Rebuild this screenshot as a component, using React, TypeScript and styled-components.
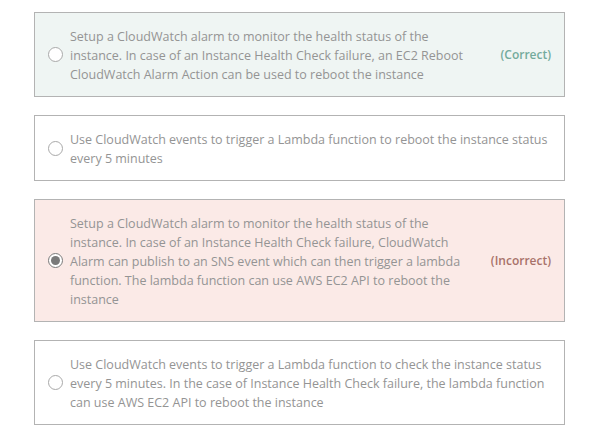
import React from "react";
import styled, { createGlobalStyle } from "styled-components";

const Global = createGlobalStyle`
  html, body { margin: 0; padding: 0; background: #ffffff; }
  body { font-family: "Open Sans", "Noto Sans", sans-serif; }
`;

const List = styled.div`
  display: flex;
  flex-direction: column;
  gap: 18px;
  width: 531px;
  padding: 12px 0 0 34px;
`;

type Status = "correct" | "incorrect" | undefined;

const Card = styled.div<{ $status?: Status }>`
  display: flex;
  align-items: center;
  box-sizing: border-box;
  border: 1px solid #b3b3b3;
  padding: 14px 13px 12px 13px;
  background: ${(p) =>
    p.$status === "correct" ? "#eff5f3" : p.$status === "incorrect" ? "#fbeae7" : "#ffffff"};
`;

const Radio = styled.span<{ $checked?: boolean }>`
  flex: none;
  box-sizing: border-box;
  width: 15px;
  height: 15px;
  border-radius: 50%;
  border: 1.5px solid ${(p) => (p.$checked ? "#7a7a7a" : "#a9a9a9")};
  background: #ffffff;
  margin: 0 7px 2px 0;
  display: flex;
  align-items: center;
  justify-content: center;
  &::after {
    content: "";
    display: ${(p) => (p.$checked ? "block" : "none")};
    width: 9px;
    height: 9px;
    border-radius: 50%;
    background: #7a7a7a;
  }
`;

const Text = styled.div`
  flex: 1;
  font-size: 12.5px;
  line-height: 19px;
  color: #949494;
`;

const Verdict = styled.span<{ $status?: Status }>`
  flex: none;
  margin: 0 0 2px 26px;
  font-size: 12px;
  font-weight: 600;
  color: ${(p) => (p.$status === "correct" ? "#74ab9c" : "#a8726a")};
`;

const options: { text: string; status?: Status; checked?: boolean }[] = [
  {
    text: "Setup a CloudWatch alarm to monitor the health status of the instance. In case of an Instance Health Check failure, an EC2 Reboot CloudWatch Alarm Action can be used to reboot the instance",
    status: "correct",
  },
  {
    text: "Use CloudWatch events to trigger a Lambda function to reboot the instance status every 5 minutes",
  },
  {
    text: "Setup a CloudWatch alarm to monitor the health status of the instance. In case of an Instance Health Check failure, CloudWatch Alarm can publish to an SNS event which can then trigger a lambda function. The lambda function can use AWS EC2 API to reboot the instance",
    status: "incorrect",
    checked: true,
  },
  {
    text: "Use CloudWatch events to trigger a Lambda function to check the instance status every 5 minutes. In the case of Instance Health Check failure, the lambda function can use AWS EC2 API to reboot the instance",
  },
];

export default function App() {
  return (
    <>
      <Global />
      <List>
        {options.map((o, i) => (
          <Card key={i} $status={o.status}>
            <Radio $checked={o.checked} />
            <Text>{o.text}</Text>
            {o.status && (
              <Verdict $status={o.status}>
                {o.status === "correct" ? "(Correct)" : "(Incorrect)"}
              </Verdict>
            )}
          </Card>
        ))}
      </List>
    </>
  );
}
